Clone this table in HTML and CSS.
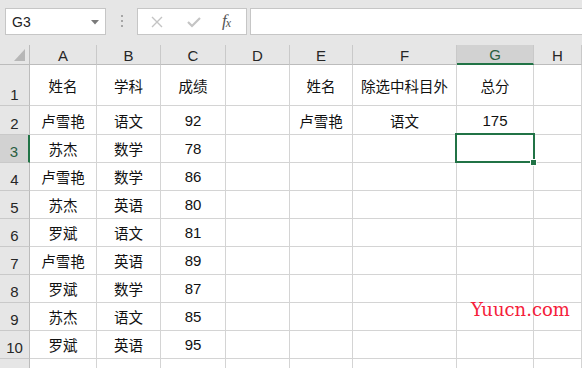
FILE: index.html
```html
<!DOCTYPE html>
<html lang="zh">
<head>
<meta charset="utf-8">
<title>Sheet</title>
<link rel="stylesheet" href="styles.css">
</head>
<body>
<div class="app">
  <div class="fbar">
    <div class="namebox">
      <span class="nb-text">G3</span>
      <svg class="nb-arrow" width="8" height="5" viewBox="0 0 8 5"><path d="M0 0H8L4 4.5Z" fill="#7a7a7a"/></svg>
    </div>
    <div class="grip">
      <svg width="3" height="13" viewBox="0 0 3 13"><rect x="0" y="0" width="2" height="2" fill="#a6a6a6"/><rect x="0" y="5" width="2" height="2" fill="#a6a6a6"/><rect x="0" y="10" width="2" height="2" fill="#a6a6a6"/></svg>
    </div>
    <div class="fbtns">
      <svg class="fb-x" width="12" height="12" viewBox="0 0 12 12"><path d="M1 1L11 11M11 1L1 11" stroke="#c4c4c4" stroke-width="1.4"/></svg>
      <svg class="fb-ok" width="14" height="12" viewBox="0 0 14 12"><path d="M1 6L5 10L13 2" stroke="#c4c4c4" stroke-width="2.2" fill="none"/></svg>
      <span class="fb-fx">f<sub>x</sub></span>
    </div>
    <div class="finput"></div>
  </div>

  <div class="sheet">
    <div class="ch corner"><svg width="11" height="12" viewBox="0 0 11 12"><path d="M11 0V12H0Z" fill="#b7b7b7"/></svg></div>
    <div class="ch">A</div><div class="ch">B</div><div class="ch">C</div><div class="ch">D</div><div class="ch">E</div><div class="ch">F</div><div class="ch selcol">G</div><div class="ch">H</div>

    <div class="rh">1</div><div class="c">姓名</div><div class="c">学科</div><div class="c">成绩</div><div class="c"></div><div class="c">姓名</div><div class="c">除选中科目外</div><div class="c">总分</div><div class="c"></div>
    <div class="rh">2</div><div class="c">卢雪艳</div><div class="c">语文</div><div class="c num">92</div><div class="c"></div><div class="c">卢雪艳</div><div class="c">语文</div><div class="c num">175</div><div class="c"></div>
    <div class="rh selrow">3</div><div class="c">苏杰</div><div class="c">数学</div><div class="c num">78</div><div class="c"></div><div class="c"></div><div class="c"></div><div class="c active"><span class="selbox"></span><span class="handle"></span></div><div class="c"></div>
    <div class="rh">4</div><div class="c">卢雪艳</div><div class="c">数学</div><div class="c num">86</div><div class="c"></div><div class="c"></div><div class="c"></div><div class="c"></div><div class="c"></div>
    <div class="rh">5</div><div class="c">苏杰</div><div class="c">英语</div><div class="c num">80</div><div class="c"></div><div class="c"></div><div class="c"></div><div class="c"></div><div class="c"></div>
    <div class="rh">6</div><div class="c">罗斌</div><div class="c">语文</div><div class="c num">81</div><div class="c"></div><div class="c"></div><div class="c"></div><div class="c"></div><div class="c"></div>
    <div class="rh">7</div><div class="c">卢雪艳</div><div class="c">英语</div><div class="c num">89</div><div class="c"></div><div class="c"></div><div class="c"></div><div class="c"></div><div class="c"></div>
    <div class="rh">8</div><div class="c">罗斌</div><div class="c">数学</div><div class="c num">87</div><div class="c"></div><div class="c"></div><div class="c"></div><div class="c"></div><div class="c"></div>
    <div class="rh">9</div><div class="c">苏杰</div><div class="c">语文</div><div class="c num">85</div><div class="c"></div><div class="c"></div><div class="c"></div><div class="c"></div><div class="c"></div>
    <div class="rh">10</div><div class="c">罗斌</div><div class="c">英语</div><div class="c num">95</div><div class="c"></div><div class="c"></div><div class="c"></div><div class="c"></div><div class="c"></div>
    <div class="rh"></div><div class="c"></div><div class="c"></div><div class="c"></div><div class="c"></div><div class="c"></div><div class="c"></div><div class="c"></div><div class="c"></div>
  </div>

  <div class="watermark">Yuucn.com</div>
</div>
</body>
</html>
```

FILE: styles.css
```css
* { box-sizing: border-box; }
html, body { margin: 0; padding: 0; }
body {
  width: 582px;
  height: 368px;
  overflow: hidden;
  background: #ffffff;
  font-family: "Liberation Sans", "Noto Sans CJK SC", sans-serif;
  color: #111;
}
.app {
  position: relative;
  width: 582px;
  height: 368px;
  overflow: hidden;
}

/* formula bar */
.fbar {
  height: 45px;
  background: #e6e6e6;
  display: flex;
  align-items: flex-start;
  padding: 8px 0 0 5px;
}
.namebox {
  width: 101px;
  height: 27px;
  background: #fff;
  border: 1px solid #c6c6c6;
  display: flex;
  align-items: center;
  justify-content: space-between;
  padding: 0 6px 0 6px;
}
.nb-text { font-size: 14px; color: #222; }
.nb-arrow { display: block; margin-top: 1px; }
.grip {
  width: 31px;
  height: 27px;
  display: flex;
  align-items: center;
  justify-content: center;
  padding-left: 1px;
}
.grip svg { display: block; }
.fbtns {
  width: 110px;
  height: 27px;
  background: #fff;
  border: 1px solid #c6c6c6;
  display: flex;
  align-items: center;
  padding-left: 13px;
}
.fb-x { display: block; }
.fb-ok { display: block; margin-left: 24px; }
.fb-fx {
  margin-left: 21px;
  font-family: "Liberation Serif", serif;
  font-style: italic;
  font-size: 17px;
  color: #555;
  line-height: 1;
  margin-top: -3px;
}
.fb-fx sub { font-size: 12px; vertical-align: -1px; margin-left: -1px; }
.finput {
  flex: 1;
  height: 27px;
  margin-left: 3px;
  background: #fff;
  border: 1px solid #c6c6c6;
  border-right: none;
}

/* sheet grid */
.sheet {
  display: grid;
  grid-template-columns: 30px 67px 64px 65px 64px 63px 104px 77px 1fr;
  grid-template-rows: 20px 41px 29px repeat(8, 28px) 28px;
}
.ch {
  background: #e6e6e6;
  border-right: 1px solid #c9c9c9;
  border-bottom: 1px solid #bcbcbc;
  display: flex;
  align-items: center;
  justify-content: center;
  font-size: 15px;
  color: #262626;
  padding-top: 1px;
}
.corner { justify-content: flex-end; align-items: flex-end; padding: 0 4px 3px 0; border-right-color: #bcbcbc; }
.corner svg { display: block; }
.selcol {
  background: #d2d2d2;
  border-bottom: 2px solid #217346;
  color: #2a5e40;
}
.rh {
  background: #e6e6e6;
  border-right: 1px solid #bcbcbc;
  border-bottom: 1px solid #c9c9c9;
  display: flex;
  align-items: flex-end;
  justify-content: center;
  font-size: 15px;
  color: #262626;
  padding-bottom: 2px;
}
.selrow {
  background: #d2d2d2;
  border-right: 2px solid #217346;
  color: #2a5e40;
}
.c {
  border-right: 1px solid #d4d4d4;
  border-bottom: 1px solid #d4d4d4;
  display: flex;
  align-items: center;
  justify-content: center;
  font-size: 14.5px;
  color: #111;
  white-space: nowrap;
}
.num { font-size: 15px; }
.active { position: relative; }
.selbox {
  position: absolute;
  left: -2px;
  top: -2px;
  right: -2px;
  bottom: -1px;
  border: 2px solid #217346;
}
.handle {
  position: absolute;
  right: -4px;
  bottom: -4px;
  width: 7px;
  height: 7px;
  background: #217346;
  border: 1px solid #fff;
}

.watermark {
  position: absolute;
  left: 471px;
  top: 301px;
  font-family: "DejaVu Serif", serif;
  font-size: 18px;
  color: #f5203a;
  line-height: 1;
}
```
